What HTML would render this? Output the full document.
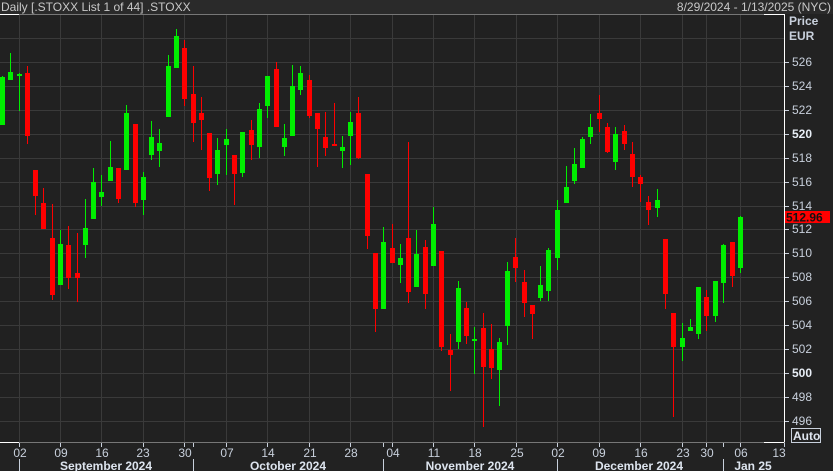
<!DOCTYPE html>
<html><head><meta charset="utf-8"><style>
html,body{margin:0;padding:0;background:#222;}
svg{display:block;font-family:"Liberation Sans",Tahoma,sans-serif;}
</style></head><body>
<svg id="s" width="833" height="471" viewBox="0 0 833 471" xmlns="http://www.w3.org/2000/svg">
<rect x="0" y="0" width="833" height="471" fill="#222222"/>
<rect x="0" y="0" width="833" height="14" fill="#2a2a2a"/>
<rect x="0" y="15" width="784" height="427" fill="#212121"/>
<text x="1" y="11" font-size="12" fill="#c8c8c8">Daily [.STOXX List 1 of 44] .STOXX</text>
<text x="831" y="11" font-size="12" fill="#c8c8c8" text-anchor="end">8/29/2024 - 1/13/2025 (NYC)</text>
<g id="grid" stroke="#3a3a3a" stroke-width="1"></g>
<line x1="0" y1="14.5" x2="784" y2="14.5" stroke="#777"/>
<line x1="0" y1="14.5" x2="19" y2="14.5" stroke="#fff"/>
<line x1="764" y1="14.5" x2="784.5" y2="14.5" stroke="#fff"/>
<line x1="784.5" y1="14" x2="784.5" y2="442" stroke="#fff"/>
<line x1="0" y1="442.5" x2="784" y2="442.5" stroke="#777"/>
<line x1="0" y1="442.5" x2="19" y2="442.5" stroke="#fff"/>
<line x1="764" y1="442.5" x2="784.5" y2="442.5" stroke="#fff"/>
<g id="candles"></g>
<g id="paxis" font-size="12" fill="#c8d0dc">
<text x="789" y="25" font-weight="bold">Price</text>
<text x="789" y="40" font-weight="bold">EUR</text>
</g>
<rect x="785" y="211" width="45" height="12" fill="#ff0000"/>
<text x="786" y="221.5" font-size="12" font-weight="bold" fill="#111">512.96</text>
<rect x="791.5" y="428.5" width="29" height="14" fill="none" stroke="#c8d0dc"/>
<text x="793" y="440" font-size="12" font-weight="bold" fill="#e0e6f0">Auto</text>
<g id="daxis"></g>
<g font-size="12" font-weight="bold" fill="#dde4ee" text-anchor="middle">
<text x="106" y="470">September 2024</text>
<text x="288" y="470">October 2024</text>
<text x="470" y="470">November 2024</text>
<text x="639" y="470">December 2024</text>
<text x="753" y="470">Jan 25</text>
</g>
</svg>
<script>
var NS="http://www.w3.org/2000/svg";
function el(p,t,a,txt){var e=document.createElementNS(NS,t);for(var k in a)e.setAttribute(k,a[k]);if(txt)e.textContent=txt;p.appendChild(e);return e;}
var grid=document.getElementById("grid");
var hy=[38,62,86,110,134,158,182,206,229,253,277,301,325,349,373,397,421];
var vx=[19,60,101,143,184,226,267,309,350,392,433,474,516,557,599,640,682,706,740];
hy.forEach(function(y){el(grid,"line",{x1:0,y1:y+.5,x2:784,y2:y+.5});});
vx.forEach(function(x){el(grid,"line",{x1:x+.5,y1:15,x2:x+.5,y2:442});});
var C=[
[2,77,125,76,125,1],[10,72,80,53,80,1],[19,74,76,73,111,1],[27,73,136,66,144,0],[35,170,196,170,215,0],
[43,203,229,188,229,0],[52,238,295,204,300,0],[60,244,285,230,285,1],[68,245,278,226,289,0],[77,273,278,233,302,0],
[85,228,245,199,258,1],[93,182,219,168,219,1],[101,192,197,175,206,1],[110,167,181,141,181,1],[118,168,199,168,203,0],
[126,113,170,105,170,1],[135,124,203,124,207,0],[143,177,200,172,215,1],[151,137,155,121,160,1],[159,143,151,129,167,1],
[168,66,117,55,117,1],[176,36,68,29,68,1],[184,48,99,40,106,0],[193,94,123,66,142,0],[201,113,120,97,150,0],
[209,133,178,133,191,0],[217,150,174,138,185,1],[226,139,145,129,175,1],[234,155,174,155,205,0],[242,132,173,132,177,1],
[251,130,145,120,160,0],[259,109,147,103,158,1],[267,76,106,76,118,1],[276,69,127,62,127,0],[284,138,147,124,156,1],
[292,86,136,65,136,1],[300,73,90,66,95,1],[309,80,116,75,118,0],[317,113,129,113,167,0],[325,137,148,112,156,0],
[334,144,146,103,146,0],[342,147,151,136,168,1],[350,122,136,112,165,1],[358,113,158,97,159,0],[367,174,236,174,249,0],
[375,253,309,253,332,0],[383,242,309,227,309,1],[392,248,263,224,263,0],[400,258,265,244,283,1],[408,238,292,142,303,0],
[416,254,287,230,287,1],[425,247,294,240,309,0],[433,224,266,207,266,1],[441,251,347,251,351,0],[450,350,355,334,391,0],
[458,288,342,281,349,1],[466,308,336,302,344,0],[474,339,341,327,374,1],[483,328,367,313,427,0],[491,349,368,324,379,0],
[499,342,370,338,406,1],[507,271,326,262,345,1],[515,257,268,238,282,0],[524,282,303,270,317,0],[532,305,314,305,339,0],
[540,285,298,266,301,1],[548,250,291,248,301,1],[557,210,258,200,270,1],[566,187,203,166,203,1],[574,164,181,148,184,1],
[582,139,168,137,168,1],[590,127,137,114,144,1],[599,113,119,95,132,0],[607,127,152,123,153,0],[615,134,162,127,170,1],
[624,131,144,125,150,0],[632,154,177,142,187,0],[640,177,184,175,202,0],[648,202,210,196,225,0],[657,200,208,189,217,1],
[665,239,294,239,309,0],[673,313,347,313,417,0],[682,338,347,323,361,1],[690,327,331,319,331,1],[698,287,334,287,339,1],
[706,297,316,290,331,0],[715,281,316,281,322,1],[723,245,283,244,303,1],[732,242,276,242,287,0],[740,217,268,216,273,1]];
var cg=document.getElementById("candles");
C.forEach(function(c){var col=c[5]?"#00ee00":"#ff0000";
el(cg,"line",{x1:c[0]+.5,y1:c[3],x2:c[0]+.5,y2:c[4],stroke:col});
el(cg,"rect",{x:c[0]-2,y:c[1],width:5,height:Math.max(2,c[2]-c[1]),fill:col});});
var pa=document.getElementById("paxis");
for(var i=0;i<16;i++){var y=hy[i+1],p=526-2*i;
el(pa,"line",{x1:785,y1:y+.5,x2:789,y2:y+.5,stroke:"#c8d0dc"});
var b=(p==520||p==500);
var a={x:792,y:y+4};if(b){a["font-weight"]="bold";a.fill="#e8eef6";}
el(pa,"text",a,String(p));}
var da=document.getElementById("daxis");
var ticks=[19,60,101,143,184,193,226,267,309,350,383,392,433,474,516,557,599,640,682,706,723,740,784];
ticks.forEach(function(x){el(da,"line",{x1:x+.5,y1:443,x2:x+.5,y2:447,stroke:"#c8d0dc"});});
[19,193,383,557,723].forEach(function(x){el(da,"line",{x1:x+.5,y1:459,x2:x+.5,y2:471,stroke:"#c8d0dc"});});
var L=[[20,"02"],[61,"09"],[102,"16"],[143,"23"],[185,"30"],[227,"07"],[268,"14"],[310,"21"],[351,"28"],[393,"04"],[434,"11"],[475,"18"],[517,"25"],[558,"02"],[599,"09"],[641,"16"],[683,"23"],[707,"30"],[741,"06"],[779,"13"]];
L.forEach(function(l){el(da,"text",{x:l[0],y:457,"font-size":12,fill:"#c8d0dc","text-anchor":"middle"},l[1]);});
</script>
</body></html>
